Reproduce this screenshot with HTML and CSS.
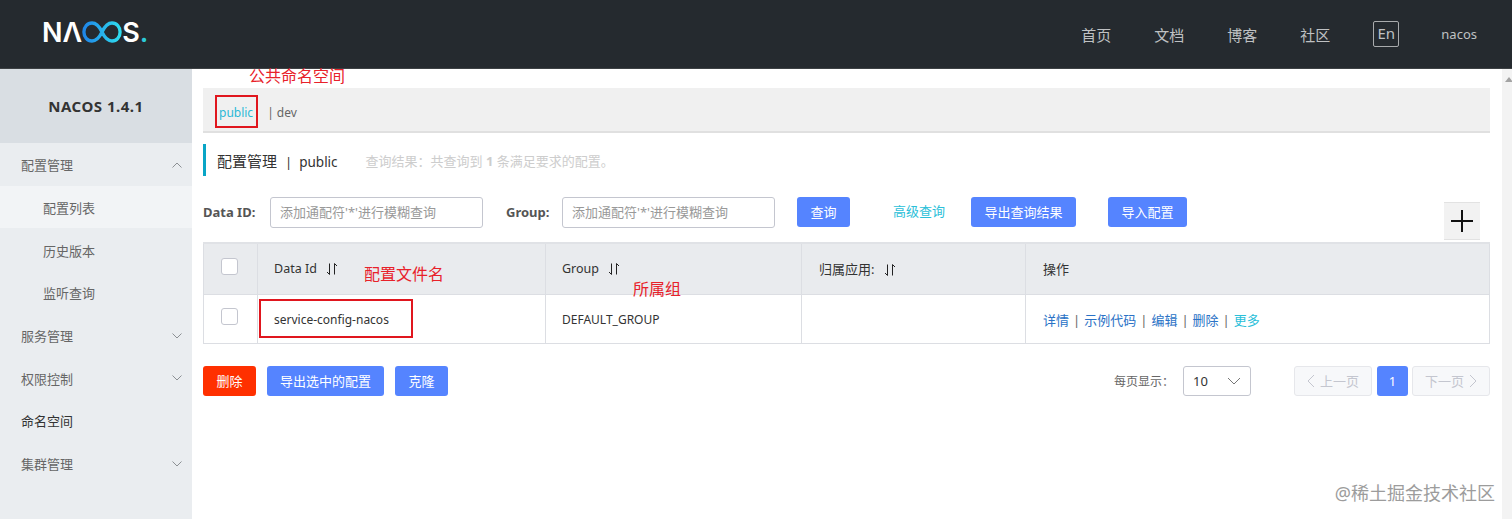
FILE: index.html
```html
<!DOCTYPE html>
<html lang="zh-CN">
<head>
    <meta charset="UTF-8">
    <meta name="viewport" content="width=device-width, initial-scale=1.0">
    <title>Nacos</title>
    <link rel="stylesheet" href="styles.css">
</head>
<body>
    <header class="topbar">
        <div class="logo">
            <span>NΛ</span>
            <svg class="logo-loop" width="40" height="22" viewBox="0 0 42 22" preserveAspectRatio="none" fill="none">
                <defs>
                    <linearGradient id="loop" x1="0" y1="0" x2="1" y2="0">
                        <stop offset="0" stop-color="#1f86e8"/>
                        <stop offset="1" stop-color="#2fdcef"/>
                    </linearGradient>
                </defs>
                <path d="M21 11C18 5 15 2 10.500 2C5.500 2 2 6 2 11C2 16 5.500 20 10.500 20C15 20 18 17 21 11C24 5 27 2 31.500 2C36.500 2 40 6 40 11C40 16 36.500 20 31.500 20C27 20 24 17 21 11Z" stroke="url(#loop)" stroke-width="3.500"/>
            </svg>
            <span>S</span><span class="logo-dot">.</span>
        </div>
        <nav class="topnav">
            <a>首页</a>
            <a>文档</a>
            <a>博客</a>
            <a>社区</a>
            <a class="lang">En</a>
            <a class="user">nacos</a>
        </nav>
    </header>

    <div class="layout">
        <aside class="sidebar">
            <div class="side-title">NACOS 1.4.1</div>
            <ul class="menu">
                <li class="menu-item">配置管理
                    <svg class="chevron" width="10" height="6" viewBox="0 0 10 6"><path d="M0.500 5.500L5 1L9.500 5.500"/></svg>
                </li>
                <li class="menu-sub active">配置列表</li>
                <li class="menu-sub">历史版本</li>
                <li class="menu-sub">监听查询</li>
                <li class="menu-item">服务管理
                    <svg class="chevron" width="10" height="6" viewBox="0 0 10 6"><path d="M0.500 0.500L5 5L9.500 0.500"/></svg>
                </li>
                <li class="menu-item">权限控制
                    <svg class="chevron" width="10" height="6" viewBox="0 0 10 6"><path d="M0.500 0.500L5 5L9.500 0.500"/></svg>
                </li>
                <li class="menu-item dark">命名空间</li>
                <li class="menu-item">集群管理
                    <svg class="chevron" width="10" height="6" viewBox="0 0 10 6"><path d="M0.500 0.500L5 5L9.500 0.500"/></svg>
                </li>
            </ul>
        </aside>

        <main class="content">
            <div class="ns-bar">
                <span class="ns-current">public</span>
                <span class="ns-sep">|</span>
                <span class="ns-other">dev</span>
            </div>

            <div class="page-title">
                <h1>配置管理<span class="title-sep">|</span><span class="title-ns">public</span></h1>
                <p class="result">查询结果：共查询到 <b>1</b> 条满足要求的配置。</p>
            </div>

            <div class="filters">
                <label class="filter-label">Data ID:</label>
                <input class="filter-input" placeholder="添加通配符'*'进行模糊查询">
                <label class="filter-label group-label">Group:</label>
                <input class="filter-input" placeholder="添加通配符'*'进行模糊查询">
                <button class="btn btn-search">查询</button>
                <a class="advanced">高级查询</a>
                <button class="btn btn-export">导出查询结果</button>
                <button class="btn btn-import">导入配置</button>
                <button class="add-btn" aria-label="add">
                    <svg width="24" height="24" viewBox="0 0 24 24"><path d="M12 1V23M1 12H23"/></svg>
                </button>
            </div>

            <table class="config-table">
                <thead>
                    <tr>
                        <th class="col-check"><span class="check"></span></th>
                        <th class="col-id">Data Id <svg class="sort" width="12" height="12" viewBox="0 0 12 12"><path d="M3.500 0.500V11.500L1 9M8.500 11.500V0.500L11 3"/></svg></th>
                        <th class="col-group">Group <svg class="sort" width="12" height="12" viewBox="0 0 12 12"><path d="M3.500 0.500V11.500L1 9M8.500 11.500V0.500L11 3"/></svg></th>
                        <th class="col-app">归属应用: <svg class="sort" width="12" height="12" viewBox="0 0 12 12"><path d="M3.500 0.500V11.500L1 9M8.500 11.500V0.500L11 3"/></svg></th>
                        <th class="col-ops">操作</th>
                    </tr>
                </thead>
                <tbody>
                    <tr>
                        <td class="cell-check"><span class="check"></span></td>
                        <td class="cell-text">service-config-nacos</td>
                        <td class="cell-text">DEFAULT_GROUP</td>
                        <td></td>
                        <td class="actions">
                            <a>详情</a><i>|</i><a>示例代码</a><i>|</i><a>编辑</a><i>|</i><a>删除</a><i>|</i><a class="more">更多</a>
                        </td>
                    </tr>
                </tbody>
            </table>

            <div class="table-foot">
                <button class="btn btn-danger">删除</button>
                <button class="btn btn-export-selected">导出选中的配置</button>
                <button class="btn btn-clone">克隆</button>
                <div class="pager">
                    <span class="page-size-label">每页显示：</span>
                    <div class="page-size">10
                        <svg width="14" height="8" viewBox="0 0 14 8" fill="none"><path d="M1 1L7 7L13 1"/></svg>
                    </div>
                    <button class="page-btn page-prev">
                        <svg width="8" height="14" viewBox="0 0 8 14"><path d="M7 1L1 7L7 13"/></svg>上一页
                    </button>
                    <button class="page-num">1</button>
                    <button class="page-btn page-next">下一页
                        <svg width="8" height="14" viewBox="0 0 8 14"><path d="M1 1L7 7L1 13"/></svg>
                    </button>
                </div>
            </div>

            <!-- red notes drawn on the screenshot -->
            <span class="note note-ns">公共命名空间</span>
            <span class="note note-file">配置文件名</span>
            <span class="note note-group">所属组</span>
            <span class="mark mark-ns"></span>
            <span class="mark mark-file"></span>
            <span class="watermark">@稀土掘金技术社区</span>
        </main>

        <div class="scroll-track"><span class="scroll-up"></span></div>
    </div>
</body>
</html>
```

FILE: styles.css
```css
* {
    box-sizing: border-box;
}

html, body {
    height: 100%;
}

body {
    margin: 0;
    display: flex;
    flex-direction: column;
    overflow: hidden;
    background: #fff;
    color: #333;
    font-family: "Noto Sans", "Noto Sans CJK SC", sans-serif;
    font-size: 13px;
}

.topbar {
    height: 69px;
    flex: none;
    display: flex;
    justify-content: space-between;
    align-items: center;
    padding: 0 35px 0 42px;
    background: #252a2f;
    border-bottom: 1px solid #3d4144;
}

.logo {
    display: flex;
    align-items: center;
    margin-bottom: 4px;
    color: #fff;
    font-family: "Inter", sans-serif;
    font-size: 27px;
    font-weight: 600;
    line-height: 1;
}

.logo-dot {
    color: #2cc9d8;
}

.topnav {
    display: flex;
    align-items: center;
    color: #bfc1c3;
    font-size: 15px;
}

.topnav a {
    margin-left: 43px;
}

.topnav .lang {
    width: 26px;
    height: 26px;
    border: 1px solid #a9abad;
    border-radius: 2px;
    text-align: center;
    line-height: 22px;
}

.topnav .user {
    margin-left: 42px;
    font-size: 13px;
}

.layout {
    flex: 1;
    display: flex;
    min-height: 0;
}

.sidebar {
    width: 192px;
    flex: none;
    background: #eaedf0;
}

.side-title {
    height: 74px;
    background: #d9dee3;
    color: #333;
    font-size: 15px;
    font-weight: 700;
    letter-spacing: 0.5px;
    line-height: 74px;
    text-align: center;
}

.menu {
    margin: 0;
    padding: 0;
    list-style: none;
}

.menu-item,
.menu-sub {
    height: 42.700px;
    display: flex;
    align-items: center;
    justify-content: space-between;
    padding: 1px 10px 0 21px;
    color: #666;
}

.menu-sub {
    padding-left: 43px;
}

.menu-sub.active {
    background: #f2f4f6;
}

.menu-item.dark {
    color: #333;
}

.chevron {
    fill: none;
    stroke: #8c9094;
}

.content {
    position: relative;
    flex: 1;
    padding: 19px 12px 0 11px;
}

.ns-bar {
    height: 45px;
    display: flex;
    align-items: center;
    padding: 6px 0 0 16px;
    background: #f0f0f0;
    border-bottom: 2px solid #e0e0e0;
    color: #666;
    font-size: 12px;
}

.ns-current {
    color: #2bb8d6;
}

.ns-sep {
    margin: 0 3px 0 14px;
}

.page-title {
    height: 32px;
    display: flex;
    align-items: center;
    margin-top: 11px;
    padding-left: 11px;
    border-left: 3px solid #09a5c6;
}

.page-title h1 {
    margin: 0;
    color: #333;
    font-size: 15px;
    font-weight: 400;
}

.title-sep {
    margin: 0 7px 0 8px;
    font-size: 13px;
}

.title-ns {
    font-size: 13.500px;
}

.result {
    margin: 0 0 0 28px;
    color: #cdcdcd;
}

.filters {
    height: 45px;
    display: flex;
    align-items: flex-start;
    margin-top: 21px;
}

.filter-label {
    width: 67px;
    height: 31px;
    color: #555;
    font-weight: 700;
    line-height: 30px;
}

.group-label {
    width: 56px;
    margin-left: 23px;
}

.filter-input {
    width: 213px;
    height: 31px;
    padding: 0 10px 2px 9px;
    background: #fff;
    border: 1px solid #c4c6cf;
    border-radius: 3px;
    font: inherit;
}

.filter-input::placeholder {
    color: #999;
}

.btn {
    height: 30px;
    padding: 0;
    background: #5584ff;
    border: none;
    border-radius: 3px;
    color: #fff;
    font: inherit;
}

.filters .btn {
    padding-bottom: 2px;
}

.btn-search {
    width: 53px;
    margin-left: 22px;
}

.advanced {
    margin-left: 43px;
    color: #2bc0d9;
    line-height: 29px;
}

.btn-export {
    width: 105px;
    margin-left: 26px;
}

.btn-import {
    width: 79px;
    margin-left: 32px;
}

.add-btn {
    width: 36px;
    height: 38px;
    display: flex;
    align-items: center;
    justify-content: center;
    margin: 5px 10px 0 auto;
    padding: 0;
    background: #f2f2f2;
    border: none;
    border-top: 1px solid #e2e2e2;
    border-bottom: 1px solid #e2e2e2;
}

.add-btn path {
    fill: none;
    stroke: #111;
    stroke-width: 2;
}

.config-table {
    width: 100%;
    table-layout: fixed;
    border-collapse: collapse;
    border: 1px solid #dcdee3;
    border-top: 2px solid #e0e2e6;
    color: #333;
    font-size: 12px;
}

.col-check {
    width: 54px;
}

.col-id {
    width: 288px;
}

.col-group {
    width: 256px;
}

.col-app {
    width: 224px;
}

.config-table th {
    height: 51px;
    padding: 0 0 0 17px;
    background: #e9ebee;
    border-left: 1px solid #dcdee3;
    border-bottom: 1px solid #dcdee3;
    font-size: 12.500px;
    font-weight: 400;
    text-align: left;
}

.config-table td {
    height: 49px;
    padding: 2px 0 0 17px;
    border-left: 1px solid #dcdee3;
}

.config-table .cell-check {
    padding-top: 0;
}

.config-table .col-id,
.config-table .col-group,
.config-table .cell-text {
    padding-left: 16px;
}

.config-table .col-app,
.config-table .col-ops {
    font-size: 13px;
}

.sort {
    margin-left: 6px;
    vertical-align: -2px;
}

.sort path {
    fill: none;
    stroke: #222;
}

.check {
    display: block;
    width: 17px;
    height: 17px;
    margin-bottom: 4px;
    background: #fff;
    border: 1px solid #c4c6cf;
    border-radius: 3px;
}

.config-table .actions {
    font-size: 13px;
}

.actions a {
    color: #2a72c6;
}

.actions i {
    margin: 0 4px;
    color: #666;
    font-style: normal;
}

.actions .more {
    color: #2bc0d9;
}

.table-foot {
    display: flex;
    align-items: center;
    margin-top: 22px;
}

.table-foot .btn {
    margin-right: 11px;
}

.table-foot .btn-danger {
    width: 53px;
    background: #ff3000;
}

.btn-export-selected {
    width: 117px;
}

.btn-clone {
    width: 53px;
}

.pager {
    display: flex;
    align-items: center;
    margin-left: auto;
}

.page-size-label {
    margin-right: 9px;
    color: #666;
    font-size: 12px;
}

.page-size {
    width: 68px;
    height: 30px;
    display: flex;
    align-items: center;
    justify-content: space-between;
    margin-right: 43px;
    padding: 0 9px;
    border: 1px solid #c4c6cf;
    border-radius: 3px;
}

.page-size path {
    stroke: #777;
}

.page-btn {
    width: 78px;
    height: 30px;
    display: flex;
    align-items: center;
    justify-content: center;
    gap: 5px;
    padding: 0;
    background: #f7f8fa;
    border: 1px solid #e6e7eb;
    border-radius: 3px;
    color: #c4c6cf;
    font: inherit;
}

.page-btn path {
    fill: none;
    stroke: #c4c6cf;
}

.page-num {
    width: 31px;
    height: 30px;
    margin: 0 4px 0 5px;
    padding: 0;
    background: #5584ff;
    border: none;
    border-radius: 3px;
    color: #fff;
    font: inherit;
}

.scroll-track {
    position: relative;
    width: 10px;
    flex: none;
    background: #f3f3f3;
}

.scroll-up {
    position: absolute;
    top: 8px;
    left: 3px;
    border-left: 4px solid transparent;
    border-right: 4px solid transparent;
    border-bottom: 5px solid #a3a3a3;
}

.note {
    position: absolute;
    color: #e8212a;
    font-size: 16px;
    line-height: 20px;
}

.note-ns {
    left: 57px;
    top: -3px;
}

.note-file {
    left: 172px;
    top: 195px;
}

.note-group {
    left: 441px;
    top: 210px;
}

.mark {
    position: absolute;
    border: 2px solid #e0161e;
}

.mark-ns {
    left: 23px;
    top: 26px;
    width: 43px;
    height: 33px;
}

.mark-file {
    left: 67px;
    top: 230px;
    width: 154px;
    height: 39px;
}

.watermark {
    position: absolute;
    right: 7px;
    bottom: 13px;
    color: #9c9c9c;
    font-size: 18px;
    line-height: 26px;
}
```
